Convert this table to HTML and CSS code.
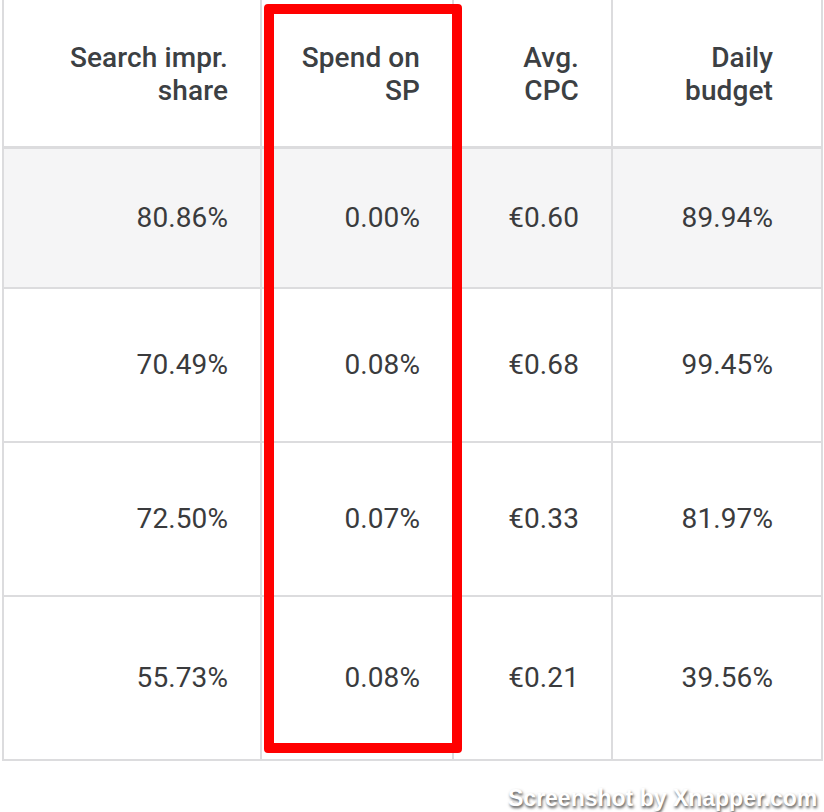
FILE: index.html
```html
<!DOCTYPE html>
<html lang="en">
<head>
  <meta charset="UTF-8">
  <title>Campaign Metrics</title>
  <link rel="stylesheet" href="styles.css">
</head>
<body>

  <div class="page">
    <div class="grid">
      <!-- Header row -->
      <div class="cell head first">Search impr.<br>share</div>
      <div class="cell head">Spend on<br>SP</div>
      <div class="cell head">Avg.<br>CPC</div>
      <div class="cell head last">Daily<br>budget</div>

      <div class="cell row1 hl first">80.86%</div>
      <div class="cell row1 hl">0.00%</div>
      <div class="cell row1 hl">€0.60</div>
      <div class="cell row1 hl last">89.94%</div>

      <div class="cell first">70.49%</div>
      <div class="cell">0.08%</div>
      <div class="cell">€0.68</div>
      <div class="cell last">99.45%</div>

      <div class="cell first">72.50%</div>
      <div class="cell">0.07%</div>
      <div class="cell">€0.33</div>
      <div class="cell last">81.97%</div>

      <div class="cell row4 first">55.73%</div>
      <div class="cell row4">0.08%</div>
      <div class="cell row4">€0.21</div>
      <div class="cell row4 last">39.56%</div>
    </div>

    <!-- highlight around the Spend on SP column -->
    <div class="highlight"></div>

    <div class="watermark">Screenshot by Xnapper.com</div>
  </div>

</body>
</html>
```

FILE: styles.css
```css
body {
  margin: 0;
  padding: 0;
  background-color: #ffffff;
  font-family: Roboto, "Liberation Sans", Arial, sans-serif;
  overflow: hidden;
}

.page {
  position: relative;
  width: 824px;
  height: 812px;
  overflow: hidden;
}

.grid {
  margin-left: 2px;
  display: grid;
  grid-template-columns: 260px 192px 159px 210px;
  grid-template-rows: 149px 140px 154px 154px 164px;
}

.cell {
  box-sizing: border-box;
  border-right: 2px solid #dcdcde;
  border-bottom: 2px solid #dcdcde;
  display: flex;
  align-items: center;
  justify-content: flex-end;
  padding-right: 32px;
  padding-bottom: 2px;
  font-size: 28px;
  color: #3a3b3d;
  letter-spacing: 0.1px;
}

.cell.first {
  border-left: 2px solid #dcdcde;
}

.cell.last {
  padding-right: 48px;
}

.cell.head {
  display: block;
  text-align: right;
  padding-top: 41px;
  line-height: 33px;
  font-weight: 500;
  color: #3c4043;
  border-bottom: 3px solid #dcdcde;
}

.cell.hl {
  background-color: #f5f5f6;
}

.highlight {
  position: absolute;
  left: 264px;
  top: 4px;
  width: 198px;
  height: 749px;
  box-sizing: border-box;
  border: 10px solid #ff0000;
  border-radius: 4px;
}

.watermark {
  position: absolute;
  left: 508px;
  top: 787px;
  white-space: nowrap;
  font-family: "Liberation Sans", Arial, sans-serif;
  font-weight: bold;
  font-size: 23px;
  line-height: 23px;
  color: #ffffff;
  text-shadow: 1px 2px 3px rgba(0, 0, 0, 0.7);
}
```
